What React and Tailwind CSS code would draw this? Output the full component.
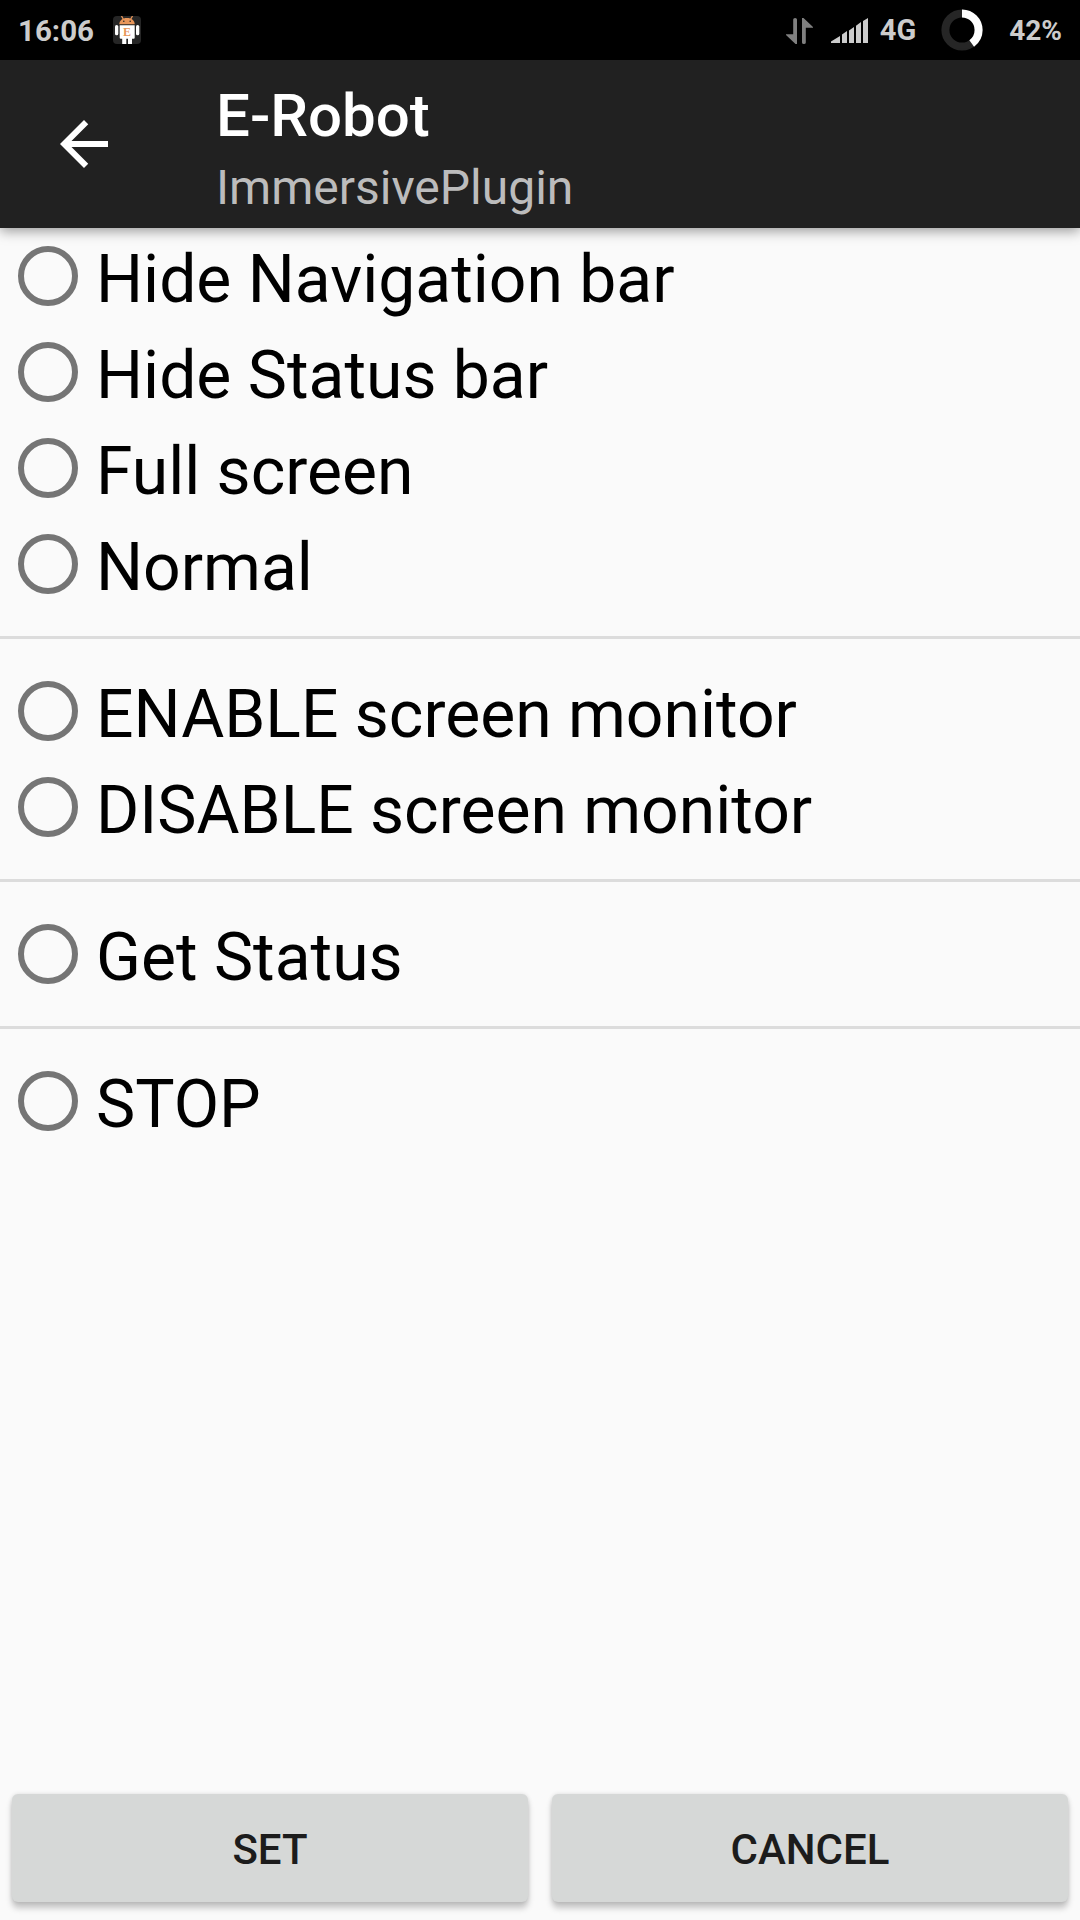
import clsx from 'clsx';

const groups = [
  ['Hide Navigation bar', 'Hide Status bar', 'Full screen', 'Normal'],
  ['ENABLE screen monitor', 'DISABLE screen monitor'],
  ['Get Status'],
  ['STOP'],
];

const RobotIcon = () => (
  <svg className="w-7 h-7 shrink-0" viewBox="0 0 28 28">
    <rect width="28" height="28" rx="4" fill="#262626" />
    <path d="M8.5 0l2.3 4M19.5 0l-2.3 4" stroke="#e8965a" strokeWidth="1.3" />
    <path d="M6.3 8.3c0-3.8 3-6.3 7.7-6.3s7.7 2.5 7.7 6.3z" fill="#e8965a" />
    <circle cx="10.8" cy="5.3" r="0.8" fill="#262626" />
    <circle cx="17.2" cy="5.3" r="0.8" fill="#262626" />
    <path d="M6.7 9.3h15v12.4a1 1 0 0 1-1 1H19V28h-4v-5.3h-1.7V28H9.2v-5.3H7.7a1 1 0 0 1-1-1z" fill="#fff" />
    <rect x="2" y="9" width="3.3" height="10.3" rx="1.6" fill="#fff" />
    <rect x="23" y="9" width="3.3" height="10.3" rx="1.6" fill="#fff" />
    <text x="14.1" y="20" textAnchor="middle" fontSize="12" fontFamily="Liberation Serif, serif" fill="#e8965a">E</text>
  </svg>
);

const DataIcon = () => (
  <svg className="mt-px w-[27px] h-[26px]" viewBox="0 0 27 26" fill="#808080">
    <path d="M7.2 1.5a1.9 1.5 0 0 1 3.8 0V26H9.5L0 17v-.8h7.2z" />
    <path d="M16 0h1.5L27 9v.8h-7.2v14.7a1.9 1.5 0 0 1-3.8 0z" />
  </svg>
);

const SignalIcon = () => (
  <svg className="ml-[18px] mt-px w-[37px] h-[25px]" viewBox="0 0 37 25" fill="#ccc">
    <path d="M0 25v-1.5L9 18v7zM11 25v-8.5l5-3.5v12zM18 25V12.5l5-3.5v16zM25 25V7.8l5-3.8v21zM32 25V3l5-3v25z" />
  </svg>
);

const BatteryIcon = () => (
  <svg className="ml-[25px] w-[42px] h-[42px]" viewBox="0 0 42 42" fill="none" strokeWidth="8">
    <circle cx="21" cy="21" r="16.6" stroke="#262626" />
    <circle
      cx="21"
      cy="21"
      r="16.6"
      stroke="#fff"
      pathLength="100"
      strokeDasharray="40 60"
      transform="rotate(-90 21 21)"
    />
  </svg>
);

const StatusBar = () => (
  <div className="flex items-center justify-between h-[60px] pl-[18px] pr-[18px] bg-black text-[#ccc] text-[29px] font-bold">
    <div className="flex items-center">
      <span className="w-[95px] pt-0.5 text-[29.5px]">16:06</span>
      <RobotIcon />
    </div>
    <div className="flex items-center">
      <DataIcon />
      <SignalIcon />
      <span className="ml-3 pt-0.5">4G</span>
      <BatteryIcon />
      <span className="ml-[26px] pt-px text-[28px]">42%</span>
    </div>
  </div>
);

const Toolbar = () => (
  <header className="flex items-start h-[168px] bg-[#212121] shadow-[0_3px_12px_rgba(0,0,0,0.4)]">
    <svg className="ml-12 mt-12 w-[72px] h-[72px]" viewBox="0 0 24 24" fill="#fff">
      <path d="M20 11H7.83l5.59-5.59L12 4l-8 8 8 8 1.41-1.41L7.83 13H20v-2z" />
    </svg>
    <div className="ml-24 pt-[18px]">
      <h1 className="text-[60px] leading-[75px] font-medium text-white">E-Robot</h1>
      <p className="mt-px text-[48px] leading-[67px] text-[#bcbcbc]">ImmersivePlugin</p>
    </div>
  </header>
);

const RadioRow = ({ label }) => (
  <label className="flex items-center h-24 pl-[18px]">
    <span className="w-[60px] h-[60px] rounded-full border-[6px] border-[#757575]" />
    <span className="ml-[18px] pt-[7px] text-[66px] leading-[91px] text-black">{label}</span>
  </label>
);

const ActionButton = ({ children }) => (
  <button className="flex-1 h-[108px] pt-[3px] rounded-[6px] bg-[#d6d8d7] text-[42px] font-medium text-[#1c1c1c] shadow-[0_6px_6px_rgba(0,0,0,0.22),0_0_4px_rgba(0,0,0,0.12)]">
    {children}
  </button>
);

export default function App() {
  return (
    <div className="flex flex-col w-[1080px] h-[1920px] overflow-hidden bg-[#fafafa] font-['Roboto',sans-serif]">
      <StatusBar />
      <Toolbar />
      <main className="flex-1">
        {groups.map((group, i) => (
          <div key={group[0]} className={clsx(i > 0 && 'mt-6 pt-6 border-t-[3px] border-[#dcdcdc]')}>
            {group.map((label) => (
              <RadioRow key={label} label={label} />
            ))}
          </div>
        ))}
      </main>
      <div className="flex gap-6 px-3 pb-[18px]">
        <ActionButton>SET</ActionButton>
        <ActionButton>CANCEL</ActionButton>
      </div>
    </div>
  );
}
